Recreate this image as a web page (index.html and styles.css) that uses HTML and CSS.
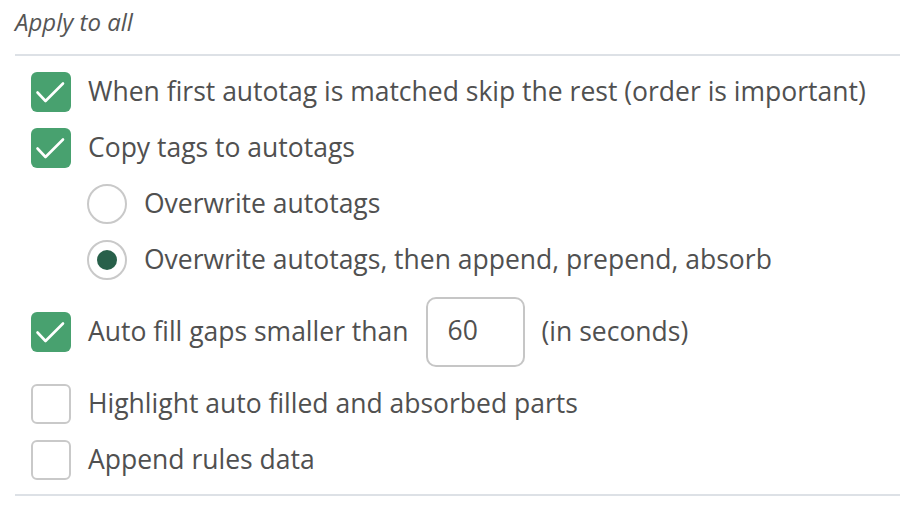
FILE: index.html
```html
<!DOCTYPE html>
<html>
<head>
<meta charset="utf-8">
<link rel="stylesheet" href="styles.css">
</head>
<body>
<div class="panel">
  <div class="panel-title">Apply to all</div>
  <div class="options">
    <label class="row">
      <span class="box checked"><svg viewBox="0 0 40 40" width="40" height="40"><path d="M6.5 20.5 L14.5 29 L32 11.5" fill="none" stroke="#fff" stroke-width="2.6" stroke-linecap="round" stroke-linejoin="round"/></svg></span>
      <span class="label">When first autotag is matched skip the rest (order is important)</span>
    </label>
    <label class="row">
      <span class="box checked"><svg viewBox="0 0 40 40" width="40" height="40"><path d="M6.5 20.5 L14.5 29 L32 11.5" fill="none" stroke="#fff" stroke-width="2.6" stroke-linecap="round" stroke-linejoin="round"/></svg></span>
      <span class="label">Copy tags to autotags</span>
    </label>
    <label class="row sub">
      <span class="radio"></span>
      <span class="label">Overwrite autotags</span>
    </label>
    <label class="row sub">
      <span class="radio selected"><span class="dot"></span></span>
      <span class="label">Overwrite autotags, then append, prepend, absorb</span>
    </label>
    <div class="row tall">
      <span class="box checked"><svg viewBox="0 0 40 40" width="40" height="40"><path d="M6.5 20.5 L14.5 29 L32 11.5" fill="none" stroke="#fff" stroke-width="2.6" stroke-linecap="round" stroke-linejoin="round"/></svg></span>
      <span class="label">Auto fill gaps smaller than</span>
      <span class="num">60</span>
      <span class="label">(in seconds)</span>
    </div>
    <label class="row">
      <span class="box"></span>
      <span class="label">Highlight auto filled and absorbed parts</span>
    </label>
    <label class="row">
      <span class="box"></span>
      <span class="label">Append rules data</span>
    </label>
  </div>
</div>
</body>
</html>
```

FILE: styles.css
```css
html, body {
  margin: 0;
  padding: 0;
  background: #ffffff;
}
body {
  font-family: "Open Sans", "Noto Sans", sans-serif;
  color: #505050;
}
.panel {
  margin-left: 15px;
}
.panel-title {
  font-style: italic;
  font-size: 24px;
  line-height: 30px;
  height: 30px;
  padding-top: 7px;
  padding-bottom: 17px;
  color: #555555;
  border-bottom: 2px solid #dde1e6;
}
.options {
  display: flex;
  flex-direction: column;
  gap: 16px;
  padding: 16px 0 14px 16px;
  border-bottom: 2px solid #dde1e6;
}
.row {
  display: flex;
  align-items: center;
  gap: 17px;
  height: 40px;
  font-size: 26.5px;
  line-height: 40px;
  white-space: nowrap;
}
.label {
  padding-bottom: 3px;
}
.row.sub {
  padding-left: 56px;
}
.row.tall {
  height: 72px;
}
.box {
  box-sizing: border-box;
  width: 40px;
  height: 40px;
  flex: none;
  border: 2px solid #c9c9c9;
  border-radius: 6px;
  background: #fff;
  display: flex;
}
.box.checked {
  border: none;
  background: #48a16f;
}
.box svg {
  display: block;
}
.radio {
  box-sizing: border-box;
  width: 40px;
  height: 40px;
  flex: none;
  border: 2px solid #c9c9c9;
  border-radius: 50%;
  display: flex;
  align-items: center;
  justify-content: center;
}
.radio .dot {
  width: 20px;
  height: 20px;
  border-radius: 50%;
  background: #28604a;
}
.num {
  box-sizing: border-box;
  width: 99px;
  height: 70px;
  flex: none;
  border: 2px solid #c6c6c6;
  border-radius: 10px;
  padding-left: 20px;
  padding-bottom: 3px;
  line-height: 63px;
}
```
